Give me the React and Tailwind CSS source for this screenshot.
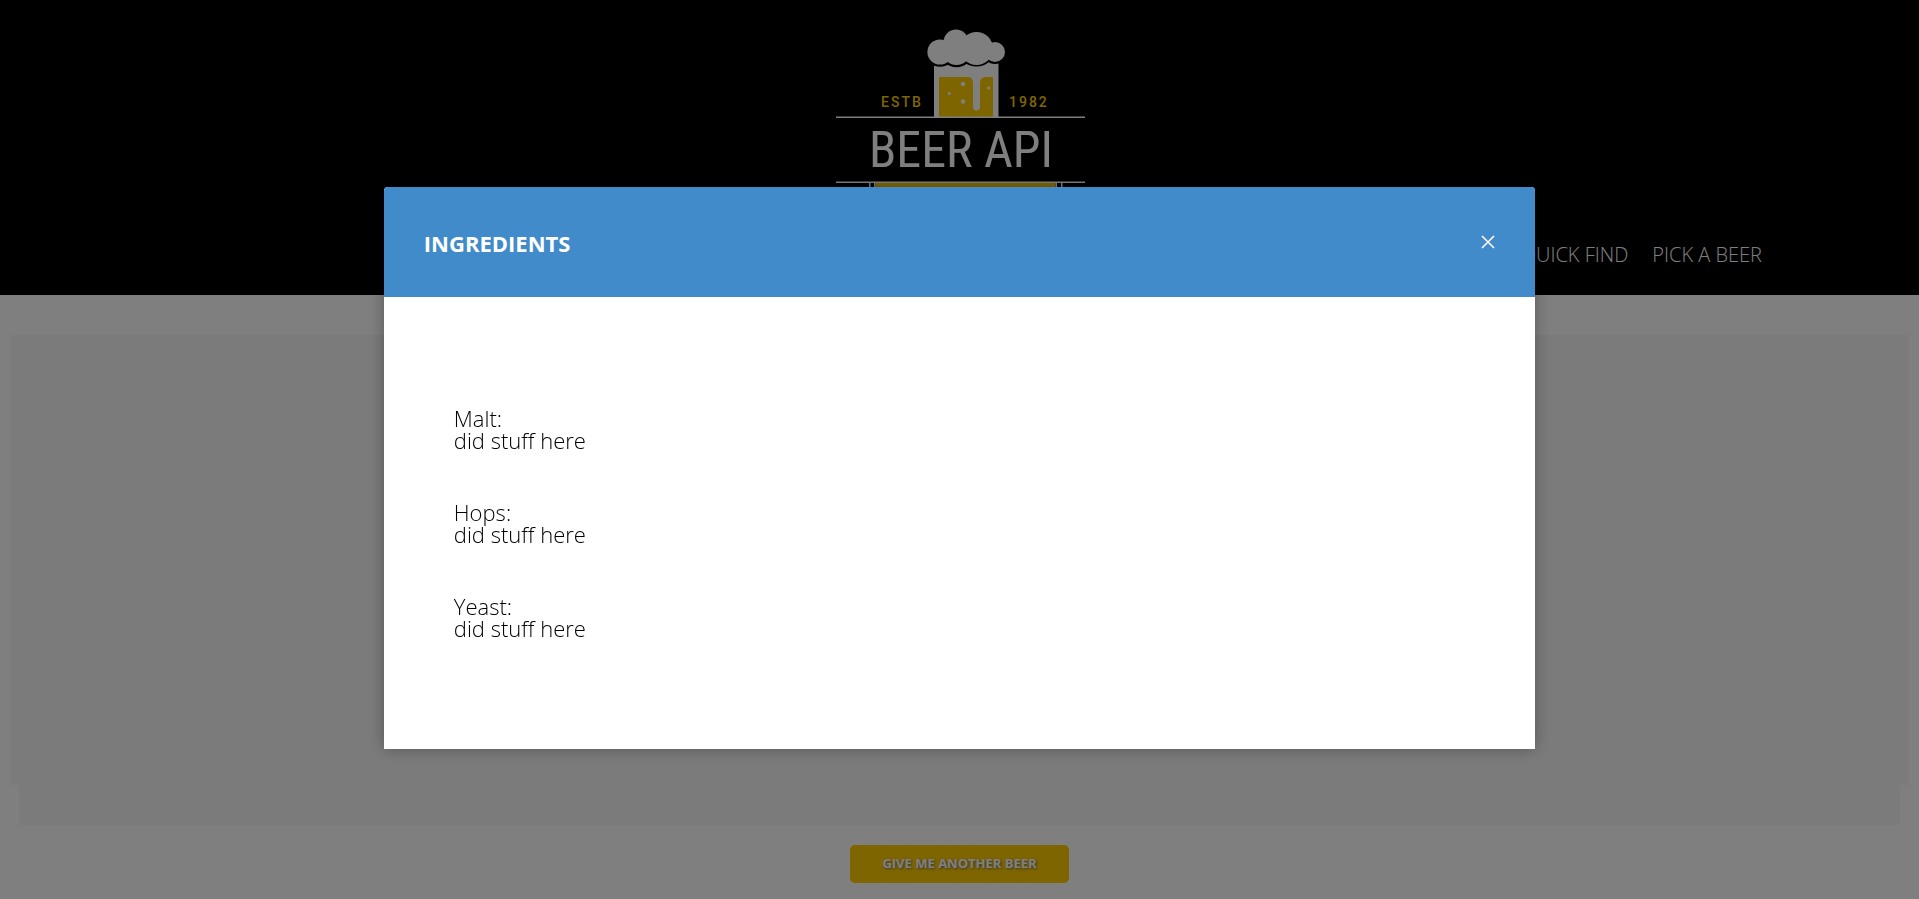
import React from "react";

const ingredients = [
  { label: "Malt", text: "did stuff here" },
  { label: "Hops", text: "did stuff here" },
  { label: "Yeast", text: "did stuff here" },
];

function Logo() {
  return (
    <svg width="250" height="200" viewBox="0 0 250 200" role="img" aria-label="Beer API">
      <rect x="99" y="36" width="64.500" height="61" fill="#fff" />
      <path d="M104 57h29q5 0 5 6v34h-34z" fill="#ffcb00" />
      <path d="M145 97V62q1-5 6-5h7v40z" fill="#ffcb00" />
      <rect x="137.500" y="80" width="8" height="17" fill="#ffcb00" />
      <g fill="#fff">
        <rect x="138" y="54" width="7" height="36.500" rx="3.500" />
        <circle cx="128" cy="64" r="2.200" />
        <circle cx="128" cy="81.500" r="2.200" />
        <circle cx="114.200" cy="73.500" r="1.500" />
        <circle cx="153.500" cy="68" r="1.500" />
      </g>
      <g fill="#000">
        <circle cx="105" cy="32" r="14.800" />
        <circle cx="121.500" cy="31" r="16.300" />
        <circle cx="141.500" cy="28" r="18.600" />
        <circle cx="160" cy="32" r="12" />
      </g>
      <g fill="#fff">
        <circle cx="105" cy="32" r="12.600" />
        <circle cx="121" cy="22" r="12.500" />
        <circle cx="121.500" cy="31" r="14" />
        <circle cx="141.500" cy="28.500" r="16.500" />
        <circle cx="160" cy="32" r="10" />
      </g>
      <g fill="#fff">
        <rect x="1" y="96.500" width="249" height="1.500" />
        <rect x="1" y="161.500" width="249" height="1.500" />
        <rect x="34" y="163" width="1.500" height="22" />
        <rect x="39" y="163" width="1.500" height="22" />
        <rect x="220.500" y="163" width="1.500" height="22" />
        <rect x="226" y="163" width="1.500" height="22" />
      </g>
      <rect x="40.500" y="163" width="180" height="22" fill="#ffcb00" />
      <g fontFamily="Roboto, sans-serif" fontSize="14" fontWeight="500" fill="#ffcb00">
        <text x="46" y="87" className="tracking-[2px]">ESTB</text>
        <text x="174" y="87" className="tracking-[2px]">1982</text>
      </g>
      <text
        x="34"
        y="147"
        fontFamily="'Roboto Condensed', 'Liberation Sans Narrow', sans-serif"
        fontSize="50"
        fontWeight="400"
        fill="#fff"
      >
        BEER API
      </text>
    </svg>
  );
}

export default function App() {
  return (
    <div className="min-h-screen bg-white font-['Open_Sans',sans-serif] font-light text-black">
      <header className="flex h-[295px] flex-col items-center justify-between bg-black pt-5">
        <Logo />
        <nav className="flex w-full justify-end gap-6 pr-[157px] pb-6 text-xl leading-8 text-white uppercase">
          <a href="#quick-find">Quick Find</a>
          <a href="#pick">Pick a Beer</a>
        </nav>
      </header>

      <main className="px-[10px] pt-10">
        <div className="h-[450px] bg-[#f6f6f6]" />
        <div className="mx-[9px] h-10 bg-[#f6f6f6]" />
        <div className="flex justify-center pt-5">
          <button className="h-[38px] rounded-[5px] bg-[#ffcb00] px-8 text-[13px] font-bold text-white uppercase text-shadow-[1px_1px_3px_#666666]">
            Give me another beer
          </button>
        </div>
      </main>

      <div className="fixed inset-0 flex items-start justify-center bg-black/50 pt-[187px]">
        <section
          role="dialog"
          aria-modal="true"
          aria-labelledby="dialog-title"
          className="w-3/5 overflow-hidden rounded-t-[4px] bg-white shadow-[0_0_16px_rgba(0,0,0,0.3)]"
        >
          <div className="flex h-[110px] items-center justify-between bg-[#428bca] px-10 text-white">
            <h2 id="dialog-title" className="pt-0.5 text-[22px] leading-8 font-bold uppercase">
              Ingredients
            </h2>
            <button aria-label="Close">
              <svg width="14" height="14" viewBox="0 0 14 14" stroke="currentColor" strokeWidth="1.600">
                <path d="M1 1l12 12M13 1L1 13" />
              </svg>
            </button>
          </div>
          <div className="flex flex-col gap-[50px] px-[70px] py-[110px] text-[22px] leading-[22px]">
            {ingredients.map((item) => (
              <div key={item.label}>
                <h3>{item.label}:</h3>
                <p>{item.text}</p>
              </div>
            ))}
          </div>
        </section>
      </div>
    </div>
  );
}
